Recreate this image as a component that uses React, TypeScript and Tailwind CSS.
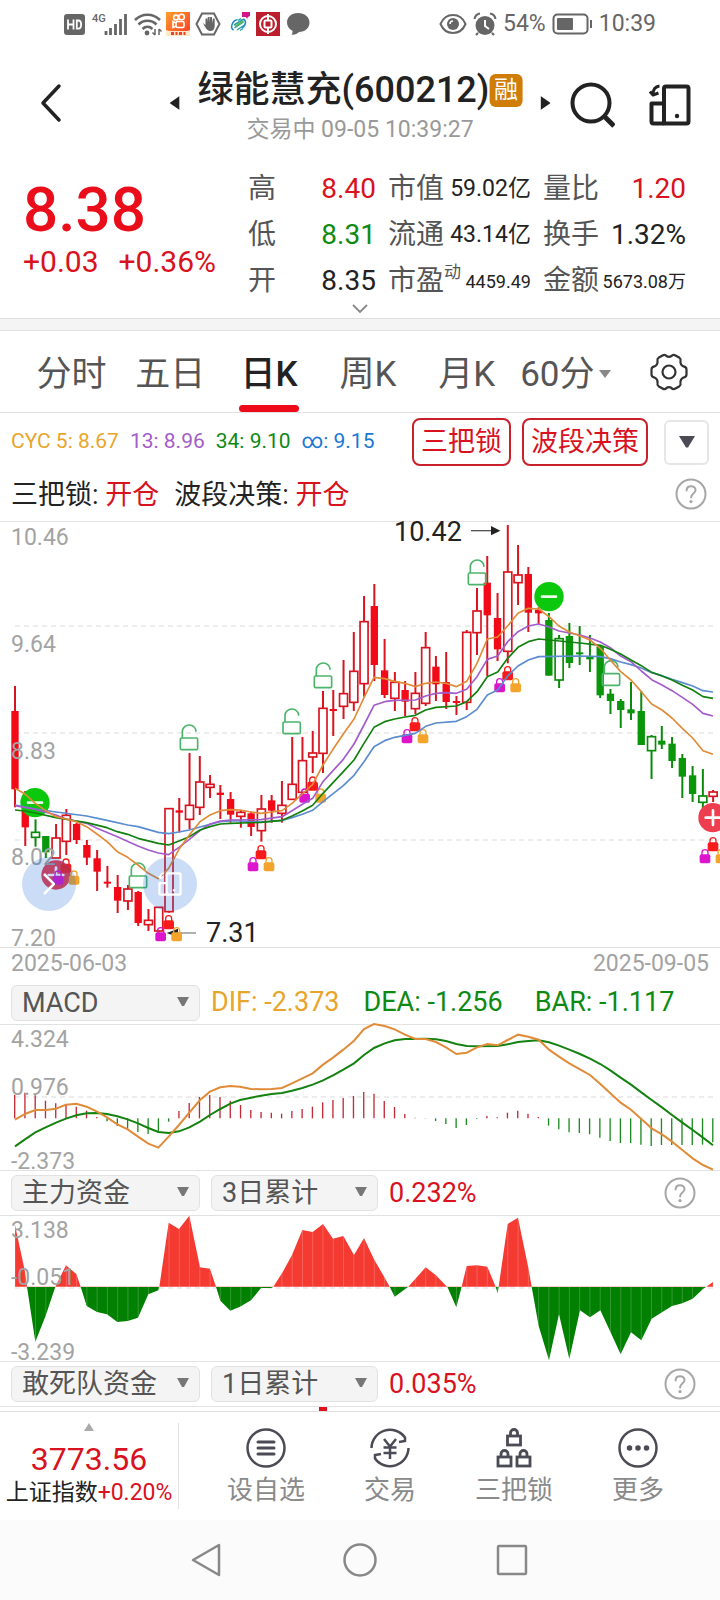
import { useState } from "react"
import type { ReactNode } from "react"

type Kind = "R" | "r" | "G" | "g"
type Candle = [number, number, number, number, Kind]

// high, body top, body bottom, low, kind (capital = filled body)
const candles: Candle[] = [
  [498, 573, 808, 862, "R"], [813, 860, 922, 978, "R"], [898, 937, 952, 980, "g"], [948, 948, 997, 1014, "G"],
  [912, 954, 1014, 1014, "r"], [867, 886, 964, 1005, "r"], [908, 912, 960, 972, "R"], [960, 975, 1013, 1035, "R"],
  [990, 1015, 1055, 1113, "R"], [1038, 1085, 1091, 1103, "R"], [1065, 1101, 1142, 1179, "R"], [1095, 1107, 1143, 1170, "r"],
  [1113, 1116, 1209, 1218, "R"], [1167, 1201, 1214, 1233, "r"], [1162, 1162, 1233, 1237, "r"], [866, 866, 1175, 1178, "r"],
  [834, 871, 878, 937, "R"], [699, 856, 898, 928, "r"], [708, 786, 862, 885, "r"], [765, 793, 802, 834, "r"],
  [795, 818, 825, 897, "R"], [816, 837, 884, 908, "R"], [870, 877, 889, 923, "r"], [875, 880, 921, 948, "R"],
  [825, 867, 932, 965, "r"], [825, 841, 872, 908, "R"], [783, 856, 880, 908, "r"], [651, 793, 838, 838, "r"],
  [651, 722, 817, 825, "r"], [633, 699, 711, 759, "r"], [513, 565, 700, 759, "r"], [510, 567, 573, 648, "R"],
  [420, 521, 559, 597, "r"], [336, 454, 547, 573, "r"], [228, 305, 491, 530, "r"], [192, 258, 435, 483, "R"],
  [357, 451, 525, 534, "R"], [456, 487, 535, 573, "r"], [483, 510, 545, 588, "R"], [456, 520, 566, 582, "r"],
  [336, 383, 550, 558, "r"], [408, 440, 493, 543, "R"], [396, 486, 546, 567, "R"], [528, 543, 549, 585, "R"],
  [330, 337, 547, 570, "r"], [204, 273, 338, 405, "r"], [108, 188, 286, 468, "R"], [219, 294, 388, 423, "R"],
  [15, 156, 394, 430, "r"], [75, 165, 188, 255, "r"], [141, 162, 278, 336, "R"], [262, 269, 280, 315, "R"],
  [279, 300, 467, 467, "G"], [345, 356, 480, 504, "g"], [309, 348, 429, 444, "G"], [318, 397, 403, 435, "G"],
  [345, 410, 418, 456, "G"], [378, 380, 526, 534, "G"], [507, 521, 543, 582, "G"], [537, 543, 570, 624, "G"],
  [486, 568, 580, 600, "G"], [513, 573, 675, 675, "G"], [645, 650, 692, 777, "g"], [618, 662, 674, 687, "G"],
  [651, 671, 723, 744, "G"], [702, 714, 770, 834, "G"], [738, 766, 822, 846, "G"], [747, 828, 847, 870, "g"],
  [810, 816, 829, 846, "r"],
]

const averages = [
  { color: "#5b8bd0", points: "45,855 106,867 168,876 260,888 321,901 383,915 414,920 475,937 506,941 537,936 568,930 600,921 661,905 691,903 720,903 783,906 846,901 876,893 907,883 938,871 969,845 1030,797 1062,766 1092,725 1122,680 1154,662 1184,652 1246,640 1277,619 1308,609 1369,604 1400,590 1431,568 1462,525 1493,510 1523,468 1554,438 1585,420 1616,410 1740,408 1801,410 1831,416 1862,426 1893,434 1924,444 1955,458 1986,467 2016,478 2047,488 2078,498 2109,512 2139,516" },
  { color: "#a45ccb", points: "45,857 106,868 168,885 198,897 260,910 291,925 352,950 414,978 445,990 475,999 506,1004 537,982 568,958 600,932 630,912 661,903 691,900 783,899 846,890 876,872 907,853 938,835 969,785 1030,718 1062,672 1092,615 1122,556 1154,545 1184,541 1246,540 1277,528 1308,520 1338,518 1369,520 1400,508 1431,470 1462,418 1493,408 1523,365 1554,335 1585,318 1616,312 1647,321 1677,333 1740,345 1770,354 1801,366 1831,383 1862,408 1893,425 1924,453 1955,479 1986,495 2016,512 2047,532 2078,553 2109,580 2139,588" },
  { color: "#12800f", points: "45,870 75,873 106,879 168,893 229,903 260,908 321,923 352,935 383,943 414,955 475,970 506,975 537,963 568,950 600,930 630,920 661,912 691,910 783,907 846,901 876,888 907,873 938,856 969,820 1030,755 1062,720 1092,670 1122,622 1154,605 1184,597 1215,591 1246,586 1277,570 1308,562 1369,558 1400,545 1431,515 1462,470 1493,456 1523,415 1554,382 1585,365 1616,357 1647,360 1740,369 1801,376 1831,388 1862,402 1893,420 1924,437 1955,457 1986,468 2016,480 2047,496 2078,510 2109,530 2139,535" },
  { color: "#e08b38", points: "45,805 75,822 106,850 137,872 168,890 198,897 229,905 260,920 291,942 321,965 352,995 383,1012 414,1035 445,1060 475,1076 506,1045 537,988 568,945 600,905 630,885 661,872 691,869 720,870 753,876 783,880 815,876 846,872 876,850 907,822 938,793 969,735 999,688 1030,642 1062,597 1092,533 1122,472 1154,476 1184,484 1215,490 1246,500 1277,490 1308,486 1338,490 1369,500 1400,484 1431,430 1462,357 1493,351 1523,318 1554,280 1585,265 1616,267 1647,290 1677,318 1708,336 1740,348 1770,360 1801,385 1831,420 1862,455 1893,480 1924,515 1955,552 1986,570 2016,594 2047,625 2078,654 2109,692 2139,703" },
]

const openLocks = [[567, 613], [414, 1027], [875, 565], [969, 427], [1431, 118], [1833, 420]]
const lockGroups = [[198, 1015], [506, 1185], [783, 975], [938, 769], [1245, 591], [1523, 438], [2139, 951]]

const macdBars = [
  465, 458, 466, 482, 490, 494, 500, 512, 531, 544, 558, 566, 576, 582, 577, 545, 513, 489, 471, 465, 471, 482, 495,
  510, 516, 518, 521, 513, 507, 500, 487, 480, 474, 468, 456, 461, 483, 501, 522, 533, 534, 543, 552, 564, 555, 537,
  528, 532, 518, 512, 521, 531, 557, 568, 577, 579, 583, 593, 603, 609, 609, 614, 618, 615, 615, 615, 615, 614, 607,
]
const difLine = "45,539 75,522 106,510 137,510 168,506 198,494 229,491 260,500 291,515 321,532 352,553 383,568 414,590 445,611 475,623 506,590 537,555 568,518 600,480 630,455 661,442 691,438 720,440 753,447 783,448 815,447 846,444 876,430 907,415 938,400 969,374 999,353 1030,329 1062,302 1092,267 1122,252 1154,258 1184,268 1215,284 1246,297 1277,297 1308,306 1338,322 1369,342 1400,338 1431,322 1462,312 1493,316 1523,300 1554,284 1585,290 1616,299 1647,329 1677,350 1708,370 1740,388 1770,405 1801,432 1831,460 1862,488 1893,509 1924,537 1955,565 1986,583 2016,605 2047,630 2078,655 2109,675 2139,689"
const deaLine = "45,619 75,598 106,577 137,562 168,548 198,536 229,526 260,520 291,519 321,522 352,529 383,538 414,550 445,564 475,576 506,579 537,574 568,562 600,545 630,525 661,507 691,491 720,480 753,473 783,467 815,462 846,459 876,452 907,444 938,434 969,421 999,406 1030,389 1062,370 1092,345 1122,324 1154,310 1184,301 1215,297 1277,296 1308,298 1338,303 1369,312 1400,318 1431,319 1493,318 1523,313 1554,306 1585,303 1616,301 1647,307 1677,317 1708,329 1740,342 1770,356 1801,372 1831,391 1862,413 1893,434 1924,457 1955,480 1986,502 2016,525 2047,548 2078,570 2109,593 2139,616"
const fundArea = "45,350 45,165 75,305 81,350 106,515 137,437 166,350 198,286 229,312 242,350 260,408 291,426 321,433 352,456 383,453 414,443 445,373 475,361 478,350 506,158 537,177 568,137 600,292 630,296 648,350 661,392 691,422 720,410 753,391 783,354 815,354 820,350 846,310 876,255 907,180 938,186 969,162 999,206 1030,198 1062,255 1092,204 1122,268 1154,323 1169,350 1184,380 1225,350 1277,292 1308,316 1338,347 1342,350 1369,412 1385,350 1400,288 1431,286 1462,290 1487,350 1493,370 1496,350 1523,162 1554,143 1585,293 1595,350 1616,468 1647,571 1677,433 1708,567 1740,421 1770,442 1801,421 1831,485 1862,553 1893,487 1924,511 1955,446 1986,427 2016,408 2047,400 2078,386 2109,357 2119,350 2139,336 2139,350"

// the series are kept in a grid three times finer than the chart's own units
const fine = "scale(0.33333)"
const xOf = (i: number) => 45 + i * 30.8

function AxisLabel({ y, children }: { y: number, children: ReactNode }) {
  return <text x="11" y={y} fontSize="23" fill="#a3a3a3">{children}</text>
}

function Lock({ x, y, color }: { x: number, y: number, color: string }) {
  return (
    <g>
      <path d={`M${x - 9} ${y + 20}v-9a9 9 0 0 1 18 0v9`} fill="none" stroke={color} strokeWidth="4" />
      <rect x={x - 16} y={y + 16} width="32" height="27" rx="6" fill={color} />
    </g>
  )
}

function OpenLock({ x, y }: { x: number, y: number }) {
  return (
    <g fill="none" stroke="#4cb56b" strokeWidth="5">
      <rect x={x - 26} y={y + 41} width="52" height="35" rx="4" />
      <path d={`M${x - 20} ${y + 41}v-20a20 19 0 0 1 41 1`} />
    </g>
  )
}

function PriceChart() {
  return (
    <svg viewBox="0 2 720 425" className="block w-full overflow-visible">
      {[106, 213, 320].map((y) => (
        <line key={y} x1="15" x2="717" y1={y} y2={y} stroke="#ededed" strokeWidth="2" strokeDasharray="5 4" />
      ))}
      <g transform={fine}>
        {candles.map(([high, top, bottom, low, kind], i) => {
          const x = xOf(i)
          const color = kind === "R" || kind === "r" ? "#d81420" : "#0a8a0a"
          const filled = kind === "R" || kind === "G"
          return (
            <g key={i}>
              <line x1={x} x2={x} y1={high} y2={low} stroke={color} strokeWidth="6" />
              {filled
                ? <rect x={x - 11} y={top} width="22" height={bottom - top} fill={kind === "R" ? "#f20a18" : "#0a960a"} />
                : <rect x={x - 12} y={top} width="24" height={bottom - top} fill="#fff" stroke={color} strokeWidth="5" />}
            </g>
          )
        })}
        {openLocks.map(([x, y]) => <OpenLock key={x} x={x} y={y} />)}
        {[[105, 848], [1647, 230]].map(([x, y]) => (
          <g key={x}>
            <circle cx={x} cy={y} r="44" fill="#0cc80c" />
            <line x1={x - 21} x2={x + 21} y1={y} y2={y} stroke="#e9fbe9" strokeWidth="8" strokeLinecap="round" />
          </g>
        ))}
        {[[168, 1065], [2139, 893]].map(([x, y]) => (
          <g key={x}>
            <circle cx={x} cy={y} r="44" fill="#ec3e4e" />
            <path d={`M${x - 22} ${y}h44M${x} ${y - 22}v44`} stroke="#fff" strokeWidth="8" strokeLinecap="round" />
          </g>
        ))}
        <path d="M534 1239h54" stroke="#888" strokeWidth="4" />
        <path d="M500 1239l34-13v26z" fill="#222" />
        {lockGroups.map(([x, y]) => (
          <g key={x}>
            <Lock x={x} y={y} color="#f91b1b" />
            <Lock x={x - 24} y={y + 36} color="#dc14cb" />
            <Lock x={x + 24} y={y + 36} color="#f3a52b" />
          </g>
        ))}
        {averages.map((line) => (
          <polyline key={line.color} points={line.points} fill="none" stroke={line.color} strokeWidth="5" strokeLinejoin="round" />
        ))}
        <path d="M1413 32h62" stroke="#555" strokeWidth="4" />
        <path d="M1501 32l-28-14v28z" fill="#222" />
      </g>
      <AxisLabel y={25}>10.46</AxisLabel>
      <AxisLabel y={132}>9.64</AxisLabel>
      <AxisLabel y={239}>8.83</AxisLabel>
      <AxisLabel y={345}>8.02</AxisLabel>
      <AxisLabel y={426}>7.20</AxisLabel>
      <text x="394" y="21" fontSize="27" fill="#222">10.42</text>
      <text x="206" y="422" fontSize="27" fill="#222">7.31</text>
    </svg>
  )
}

function MacdChart() {
  return (
    <svg viewBox="0 85 720 145" className="block w-full overflow-visible">
      <line x1="15" x2="717" y1="157" y2="157" stroke="#ededed" strokeWidth="2" strokeDasharray="5 4" />
      <g transform={fine} fill="none">
        {macdBars.map((v, i) => (
          <line key={i} x1={xOf(i) - 1} x2={xOf(i) - 1} y1="535" y2={v} stroke={v < 535 ? "#c22a36" : "#1c8c22"} strokeWidth="4" />
        ))}
        <polyline points={deaLine} stroke="#14820f" strokeWidth="6" />
        <polyline points={difLine} stroke="#e08b38" strokeWidth="6" />
      </g>
      <AxisLabel y={107}>4.324</AxisLabel>
      <AxisLabel y={155}>0.976</AxisLabel>
      <AxisLabel y={229}>-2.373</AxisLabel>
    </svg>
  )
}

function FundChart() {
  return (
    <svg viewBox="0 46 720 145" className="block w-full overflow-visible">
      <defs>
        <clipPath id="fund"><polygon points={fundArea} /></clipPath>
      </defs>
      <line x1="15" x2="717" y1="118" y2="118" stroke="#ededed" strokeWidth="2" strokeDasharray="5 4" />
      <g transform={fine}>
        <g clipPath="url(#fund)">
          <rect x="0" y="120" width="2160" height="231" fill="#f53a32" />
          <rect x="0" y="351" width="2160" height="230" fill="#028002" />
          {candles.map((_, i) => (
            <line key={i} x1={xOf(i)} x2={xOf(i)} y1="120" y2="580" stroke="#fff" strokeOpacity="0.3" strokeWidth="2" />
          ))}
        </g>
      </g>
      <AxisLabel y={68}>3.138</AxisLabel>
      <AxisLabel y={115}>-0.051</AxisLabel>
      <AxisLabel y={190}>-3.239</AxisLabel>
    </svg>
  )
}

function Picker({ label, options, wide }: { label: string, options: string[], wide?: boolean }) {
  return (
    <div className={wide ? "relative w-[189px]" : "relative w-[167px]"}>
      <select
        aria-label={label}
        className="block h-9 w-full appearance-none rounded-md border border-[#e2e2e2] bg-[#f4f4f4] pl-[10px] text-[27px] leading-8 text-[#555]"
      >
        {options.map((o) => <option key={o}>{o}</option>)}
      </select>
      <svg viewBox="0 0 14 10" className="pointer-events-none absolute top-3 right-[10px] h-[10px] w-[14px]">
        <path d="M1 0h12L8 9H6z" fill="#777" />
      </svg>
    </div>
  )
}

function HelpButton() {
  return (
    <button type="button" aria-label="帮助">
      <svg viewBox="0 0 34 34" className="block size-[34px]" fill="none" stroke="#a6a6a6" strokeWidth="2">
        <circle cx="17" cy="17" r="14.5" />
        <path d="M12.6 13.6c0-2.8 2-4.4 4.5-4.4s4.4 1.7 4.4 4c0 3.4-4.4 3.4-4.4 7.2" strokeLinecap="round" />
        <circle cx="17" cy="24.6" r="1.6" fill="#a6a6a6" stroke="none" />
      </svg>
    </button>
  )
}

function StatusBar() {
  return (
    <div className="flex h-12 items-center justify-between pr-[64px] pl-[62px] text-[23px] text-[#666]">
      <svg viewBox="62 10 250 28" className="h-7 w-[250px]">
        <rect x="64" y="14" width="21" height="21" rx="3" fill="#666" />
        <path d="M68 19.500v10M73.500 19.500v10M68 24.500h5.500M76.800 20.500v8.200h1.600c3.600 0 3.600-8.200 0-8.200z" fill="none" stroke="#fff" strokeWidth="1.800" />
        <text x="92" y="22" fontSize="11" fontWeight="500" fill="#666">4G</text>
        <path d="M106 31v4M110.500 28v7M115.500 24v11M120.500 19v16M125.500 14v21" stroke="#666" strokeWidth="2.800" />
        <g fill="none" stroke="#666" strokeWidth="2.600">
          <path d="M135 20c7-7 18-7 25 0M138.500 24.500c5-5 13-5 18 0M142.500 29c3-2.800 7-2.800 10 0" />
        </g>
        <circle cx="147" cy="33" r="2.400" fill="#666" />
        <path d="M155 29v6m-2.500-2.500 2.500 2.500M159 35v-6m2.500 2.500-2.500-2.500" stroke="#666" strokeWidth="1.500" fill="none" />
        <defs>
          <linearGradient id="ks" x2="1" y2="1">
            <stop offset="0" stopColor="#ff9f2c" />
            <stop offset="1" stopColor="#ff3726" />
          </linearGradient>
        </defs>
        <rect x="166" y="12" width="24" height="24" fill="url(#ks)" />
        <g fill="none" stroke="#fff" strokeWidth="1.600">
          <circle cx="176" cy="17.500" r="2.400" />
          <circle cx="181.500" cy="17" r="2.800" />
          <rect x="176" y="21.500" width="8" height="6" rx="1.500" />
          <path d="M176 23l-3-1.500v6L176 26" />
        </g>
        <path d="M166 30l3 1h18l3-1v6h-24z" fill="#ffe8c8" />
        <path d="M171 33.500h3m1.500 0h2m1.500 0h3m1.500 0h2" stroke="#f0402a" strokeWidth="3" />
        <path d="M202 13.500h12l5.500 10.500-5.500 10.500h-12L196.500 24z" fill="none" stroke="#666" strokeWidth="2" />
        <path d="M203 23l2.500 2v-6.500h1.800v4l.5-5.500h1.800v5.500l.6-5.500h1.800l.2 6 .8-4.500h1.700V26c0 3-1.700 5-4.200 5-3 0-4.800-2.500-7.500-8z" fill="#666" />
        <g fill="none" strokeWidth="1.500">
          <path d="M237.500 19.500c-5 1-8 8-4 10.500M242 28c5-4 4-8 1-9" stroke="#1d86c8" />
          <path d="M234 25l9-5.500M234.500 28l9-6M237 30l7.500-5M238 20.500l3-2M240 30.500l3-2" stroke="#2aa0a8" />
          <path d="M235 26.500l8.500-5.500" stroke="#58b94a" />
        </g>
        <path d="M242 12h8v4l-2 1-1 2-1-2h-4z" fill="#d4148a" />
        <rect x="256" y="12" width="24" height="24" fill="#bb1e2c" />
        <g fill="none" stroke="#fff" strokeWidth="2">
          <circle cx="268" cy="24" r="8" />
          <rect x="264.500" y="20.500" width="7" height="7" rx="1" />
          <path d="M268 14v6.500M268 27.500V34" />
        </g>
        <path d="M298 13c6.500 0 11.500 4 11.500 9.500S305 32 299 32c-1.500 1.800-4.500 3-7.500 2.600.9-1 1.200-2.400.9-3.800-3.500-1.700-5.400-4.700-5.400-8.300C287 17 291.500 13 298 13z" fill="#666" />
      </svg>
      <div className="flex items-center gap-[6px]">
        <svg viewBox="0 0 28 24" className="h-6 w-7" fill="none" stroke="#666" strokeWidth="2">
          <path d="M1.500 12C4 6 9 3 14 3s10 3 12.500 9C24 18 19 21 14 21S4 18 1.500 12z" />
          <circle cx="14" cy="12" r="6" fill="#666" stroke="none" />
          <path d="M11 12a3 3 0 0 1 3-3" stroke="#fff" strokeWidth="1.500" />
        </svg>
        <svg viewBox="0 0 24 24" className="size-6" fill="none">
          <circle cx="12" cy="13.500" r="9.500" fill="#666" />
          <path d="M12 8v6l4 3" stroke="#fff" strokeWidth="2" />
          <path d="M1.500 7C2 4 4 2 7 1.500M22.500 7C22 4 20 2 17 1.500M5 21l-2 2M19 21l2 2" stroke="#666" strokeWidth="2.200" />
        </svg>
        <span>54%</span>
        <svg viewBox="0 0 41 24" className="h-6 w-[41px]" fill="none">
          <rect x="1.500" y="2.500" width="34" height="19" rx="4" stroke="#666" strokeWidth="2" />
          <rect x="5" y="6" width="16" height="12" rx="1" fill="#666" />
          <path d="M39 8v8" stroke="#666" strokeWidth="2" />
        </svg>
        <span>10:39</span>
      </div>
    </div>
  )
}

function PanesIcon({ className }: { className: string }) {
  return (
    <svg viewBox="0 0 42 42" className={className} fill="none" stroke="currentColor" strokeWidth="4" strokeLinejoin="round">
      <path d="M17 2.500h20.500a2 2 0 0 1 2 2v33a2 2 0 0 1-2 2H15V4.500a2 2 0 0 1 2-2z" />
      <path d="M15 39.500H4.500a2 2 0 0 1-2-2v-18H15" />
      <path d="M10.500 2C6 2.500 4 5 4 10.500M1 7.500L4 11l5.500-2" strokeWidth="3" />
      <circle cx="28" cy="32" r="2.200" fill="currentColor" stroke="none" />
    </svg>
  )
}

function Header() {
  return (
    <header className="relative flex h-[102px] items-center justify-between pt-2 pr-[29px] pl-10 text-[#222]">
      <button type="button" aria-label="返回">
        <svg viewBox="0 0 22 40" className="h-10 w-[22px]" fill="none" stroke="currentColor" strokeWidth="3.500" strokeLinecap="round" strokeLinejoin="round">
          <path d="M19 3L3 20l16 17" />
        </svg>
      </button>
      <div className="absolute left-1/2 flex -translate-x-1/2 items-center gap-[18px]">
        <button type="button" aria-label="上一只">
          <svg viewBox="0 0 10 14" className="h-[14px] w-[10px]"><path d="M10 0v14L0 7z" fill="currentColor" /></svg>
        </button>
        <div className="pt-[10px] text-center">
          <h1 className="flex items-center text-[36px] leading-[44px] font-medium whitespace-nowrap">
            绿能慧充(600212)
            <span className="flex size-[33px] items-center justify-center rounded-md bg-[#d07d08] text-[24px] font-normal text-white">融</span>
          </h1>
          <p className="text-[23px] leading-9 text-[#999]">交易中 09-05 10:39:27</p>
        </div>
        <button type="button" aria-label="下一只">
          <svg viewBox="0 0 10 14" className="h-[14px] w-[10px]"><path d="M0 0v14l10-7z" fill="currentColor" /></svg>
        </button>
      </div>
      <div className="flex items-center gap-[34px] pt-1">
        <button type="button" aria-label="搜索">
          <svg viewBox="0 0 46 46" className="size-[46px]" fill="none" stroke="currentColor" strokeWidth="4">
            <circle cx="22" cy="21" r="18.500" />
            <path d="M35 34l10 10" strokeWidth="5" />
          </svg>
        </button>
        <button type="button" aria-label="分屏"><PanesIcon className="size-[42px]" /></button>
      </div>
    </header>
  )
}

const stats = [
  { label: "高", value: "8.40", style: "text-[28px] text-[#d8121e]" },
  { label: "市值", value: "59.02亿", style: "text-[23px]" },
  { label: "量比", value: "1.20", style: "text-[28px] text-[#d8121e]" },
  { label: "低", value: "8.31", style: "text-[28px] text-[#0e8a12]" },
  { label: "流通", value: "43.14亿", style: "text-[23px]" },
  { label: "换手", value: "1.32%", style: "text-[28px]" },
  { label: "开", value: "8.35", style: "text-[28px]" },
  { label: "市盈", value: "4459.49", mark: "动", style: "text-[18px]" },
  { label: "金额", value: "5673.08万", style: "text-[18px]" },
]

function Quote() {
  return (
    <section className="border-b border-[#dedede] pt-4">
      <div className="flex pr-[34px] pl-[23px]">
        <div className="w-[225px] pt-2 whitespace-nowrap text-[#ea0e1b]">
          <div className="text-[62px] leading-[72px] font-medium">8.38</div>
          <div className="flex gap-5 text-[30px] leading-8 text-[#d8121e]">
            <span>+0.03</span>
            <span>+0.36%</span>
          </div>
        </div>
        <dl className="grid flex-1 grid-cols-[127fr_142fr_142fr] gap-x-3">
          {stats.map((s) => (
            <div key={s.label} className="flex h-[46px] items-center justify-between whitespace-nowrap">
              <dt className="flex text-[28px] text-[#555]">
                {s.label}
                {s.mark && <span className="text-[17px] leading-6">{s.mark}</span>}
              </dt>
              <dd className={s.style}>{s.value}</dd>
            </div>
          ))}
        </dl>
      </div>
      <button type="button" aria-label="展开" className="mx-auto block h-[14px]">
        <svg viewBox="0 0 16 10" className="mb-1 h-[10px] w-4" fill="none" stroke="#888" strokeWidth="1.800"><path d="M1 1l7 7 7-7" /></svg>
      </button>
    </section>
  )
}

const tabs = ["分时", "五日", "日K", "周K", "月K"]

function Tabs() {
  const [active, setActive] = useState("日K")

  return (
    <nav className="flex h-[82px] border-b border-[#e2e2e2] pl-[22px] text-[35px] text-[#555]">
      {tabs.map((t) => (
        <button
          key={t}
          type="button"
          onClick={() => setActive(t)}
          className={t === active ? "relative flex-1 pt-2 font-medium text-[#222]" : "relative flex-1 pt-2"}
        >
          {t}
          {t === active && <span className="absolute bottom-0 left-1/2 h-[7px] w-[60px] -translate-x-1/2 rounded-full bg-[#ee0a18]" />}
        </button>
      ))}
      <div className="relative flex flex-1 items-center pt-2">
        <select aria-label="分钟周期" className="w-full appearance-none bg-transparent pl-1">
          <option>60分</option>
          <option>30分</option>
          <option>15分</option>
        </select>
        <svg viewBox="0 0 12 8" className="pointer-events-none absolute right-1 mb-1 h-2 w-3"><path d="M0 0h12L6 8z" fill="#888" /></svg>
      </div>
      <button type="button" aria-label="设置" className="flex w-[105px] items-center justify-center pl-1">
        <svg viewBox="0 0 40 40" className="size-10" fill="none" stroke="#333" strokeWidth="2.200" strokeLinejoin="round">
          <path d="M13.500 3.500q2.500-1.500 4 .5 2.500 1.800 5 0 1.500-2 4-.5l4 2.300q1.500 1 1 3-.5 4 3 5.600 3 .6 3 3v5.200q0 2.400-3 3-3.500 1.600-3 5.600.5 2-1 3l-4 2.300q-2.500 1.500-4-.5-2.500-1.800-5 0-1.500 2-4 .5l-4-2.300q-1.500-1-1-3 .5-4-3-5.600-3-.6-3-3v-5.200q0-2.400 3-3 3.500-1.600 3-5.600-.5-2 1-3z" />
          <circle cx="20" cy="20" r="6.500" />
        </svg>
      </button>
    </nav>
  )
}

function SmallLock({ x, y }: { x: number, y: number }) {
  return (
    <g>
      <rect x={x} y={y + 7} width="13" height="9" />
      <path d={`M${x + 3} ${y + 7}v-3a3.500 3.500 0 0 1 7 0v3`} />
    </g>
  )
}

const actions = [
  {
    label: "设自选",
    icon: <><circle cx="20" cy="20" r="18.500" /><path d="M12 14h16M12 20h16M12 26h16" strokeLinecap="round" strokeWidth="3" /></>,
  },
  {
    label: "交易",
    icon: (
      <>
        <path d="M1.500 20A18.500 18.500 0 0 1 35 9.500v3.500l-6 1M38.500 20A18.500 18.500 0 0 1 5 30.500V27l6-1" />
        <path d="M14 11l6 7.500 6-7.500M20 18.500V31M13.500 19.500h13M13.500 25h13" />
      </>
    ),
  },
  {
    label: "三把锁",
    icon: <g strokeWidth="2.800"><SmallLock x={13.500} y={1} /><SmallLock x={4} y={22} /><SmallLock x={23} y={22} /></g>,
  },
  {
    label: "更多",
    icon: (
      <>
        <circle cx="20" cy="20" r="18.500" />
        <path d="M11.500 20h.01M20 20h.01M28.500 20h.01" strokeLinecap="round" strokeWidth="5.500" />
      </>
    ),
  },
]

function BottomBar() {
  return (
    <footer className="flex h-[109px] items-center border-t border-[#e2e2e2]">
      <a href="#index" className="flex h-[86px] w-[179px] flex-col items-center border-r border-[#e2e2e2] whitespace-nowrap">
        <svg viewBox="0 0 10 8" className="h-2 w-[10px]"><path d="M5 0l5 8H0z" fill="#aaa" /></svg>
        <span className="mt-2 text-[32px] leading-10 text-[#d8121e]">3773.56</span>
        <span className="text-[23px] leading-7 text-[#222]">上证指数<span className="text-[#d8121e]">+0.20%</span></span>
      </a>
      <div className="flex flex-1 justify-between pt-1 pr-14 pl-12">
        {actions.map((a) => (
          <button key={a.label} type="button" className="flex flex-col items-center text-[26px] leading-9 text-[#8a8a8a]">
            <svg viewBox="0 0 40 40" className="mb-1 size-10" fill="none" stroke="#4a4b55" strokeWidth="2.500">{a.icon}</svg>
            {a.label}
          </button>
        ))}
      </div>
    </footer>
  )
}

function SystemNav() {
  return (
    <div className="flex h-20 items-center justify-center gap-[118px] bg-[#fbfbfb]">
      <button type="button" aria-label="返回键">
        <svg viewBox="0 0 34 34" className="size-[34px]" fill="none" stroke="#888" strokeWidth="2.500" strokeLinejoin="round"><path d="M28 2v30L2 17z" /></svg>
      </button>
      <button type="button" aria-label="主屏幕">
        <svg viewBox="0 0 34 34" className="size-[34px]" fill="none" stroke="#888" strokeWidth="2.500"><circle cx="17" cy="17" r="15.500" /></svg>
      </button>
      <button type="button" aria-label="最近任务">
        <svg viewBox="0 0 34 34" className="size-[34px]" fill="none" stroke="#888" strokeWidth="2.500"><rect x="3" y="3" width="28" height="28" rx="1" /></svg>
      </button>
    </div>
  )
}

export default function App() {
  return (
    <div className="overflow-hidden bg-white font-[Roboto,'Noto_Sans_CJK_SC',sans-serif] text-[#222]">
      <StatusBar />
      <Header />
      <Quote />
      <div className="h-3 border-b border-[#e2e2e2] bg-[#f4f4f4]" />
      <Tabs />

      <section>
        <div className="flex h-[58px] items-center justify-between pr-[11px] pl-[11px]">
          <div className="flex gap-[11px] text-[21px] whitespace-nowrap">
            <span className="text-[#e8a52c]">CYC 5: 8.67</span>
            <span className="text-[#a45ccb]">13: 8.96</span>
            <span className="text-[#0e8a12]">34: 9.10</span>
            <span className="text-[#1a78d2]">∞: 9.15</span>
          </div>
          <div className="flex items-center text-[27px] text-[#d8121e]">
            <button type="button" className="h-12 rounded-lg border-2 border-[#c9202b] px-[7px]">三把锁</button>
            <button type="button" className="ml-[11px] h-12 rounded-lg border-2 border-[#c9202b] px-[7px]">波段决策</button>
            <button type="button" aria-label="更多指标" className="ml-4 flex h-[45px] w-[45px] items-center justify-center rounded-md border-2 border-[#e6e6e6]">
              <svg viewBox="0 0 16 12" className="h-3 w-4"><path d="M0 0h16L9 11.500H7z" fill="#4a4b55" /></svg>
            </button>
          </div>
        </div>
        <div className="flex h-[50px] items-center justify-between pr-3 pb-1 pl-[11px] text-[27px]">
          <p className="flex gap-[15px] pt-[2px]">
            <span>三把锁: <span className="text-[#d8121e]">开仓</span></span>
            <span>波段决策: <span className="text-[#d8121e]">开仓</span></span>
          </p>
          <HelpButton />
        </div>
      </section>

      <section className="relative border-y border-[#e2e2e2]">
        <PriceChart />
        <button type="button" aria-label="展开工具" className="absolute top-[335px] left-[22px] flex size-[54px] items-center justify-center rounded-full bg-[#0f60d6]/22">
          <svg viewBox="0 0 12 22" className="h-[22px] w-3" fill="none" stroke="#fff" strokeWidth="2.500"><path d="M1 1l10 10L1 21" /></svg>
        </button>
        <button type="button" aria-label="多窗口" className="absolute top-[335px] left-[143px] flex size-[54px] items-center justify-center rounded-full bg-[#0f60d6]/22 text-white">
          <PanesIcon className="size-6" />
        </button>
      </section>
      <div className="flex h-[33px] items-center justify-between px-[11px] text-[23px] text-[#a3a3a3]">
        <span>2025-06-03</span>
        <span>2025-09-05</span>
      </div>

      <div className="flex h-11 items-center border-b border-[#e2e2e2] px-[11px] text-[27px] whitespace-nowrap">
        <Picker label="指标" options={["MACD", "KDJ", "RSI"]} wide />
        <div className="flex gap-6 pl-[11px]">
          <span className="text-[#e8a52c]">DIF: -2.373</span>
          <span className="mr-2 text-[#0e8a12]">DEA: -1.256</span>
          <span className="text-[#0e8a12]">BAR: -1.117</span>
        </div>
      </div>
      <MacdChart />

      <div className="flex h-[46px] items-center gap-[11px] border-y border-[#e2e2e2] pr-[23px] pl-[11px] text-[27px]">
        <Picker label="资金指标" options={["主力资金"]} wide />
        <Picker label="累计周期" options={["3日累计"]} />
        <span className="flex-1 text-[#d8121e]">0.232%</span>
        <HelpButton />
      </div>
      <FundChart />

      <div className="flex h-[46px] items-center gap-[11px] border-y border-[#e2e2e2] pr-[23px] pl-[11px] text-[27px]">
        <Picker label="资金指标二" options={["敢死队资金"]} wide />
        <Picker label="累计周期二" options={["1日累计"]} />
        <span className="flex-1 text-[#d8121e]">0.035%</span>
        <HelpButton />
      </div>
      <svg viewBox="0 0 720 4" className="block w-full"><rect x="319" width="8" height="4" fill="#e0111c" /></svg>

      <BottomBar />
      <SystemNav />
    </div>
  )
}
